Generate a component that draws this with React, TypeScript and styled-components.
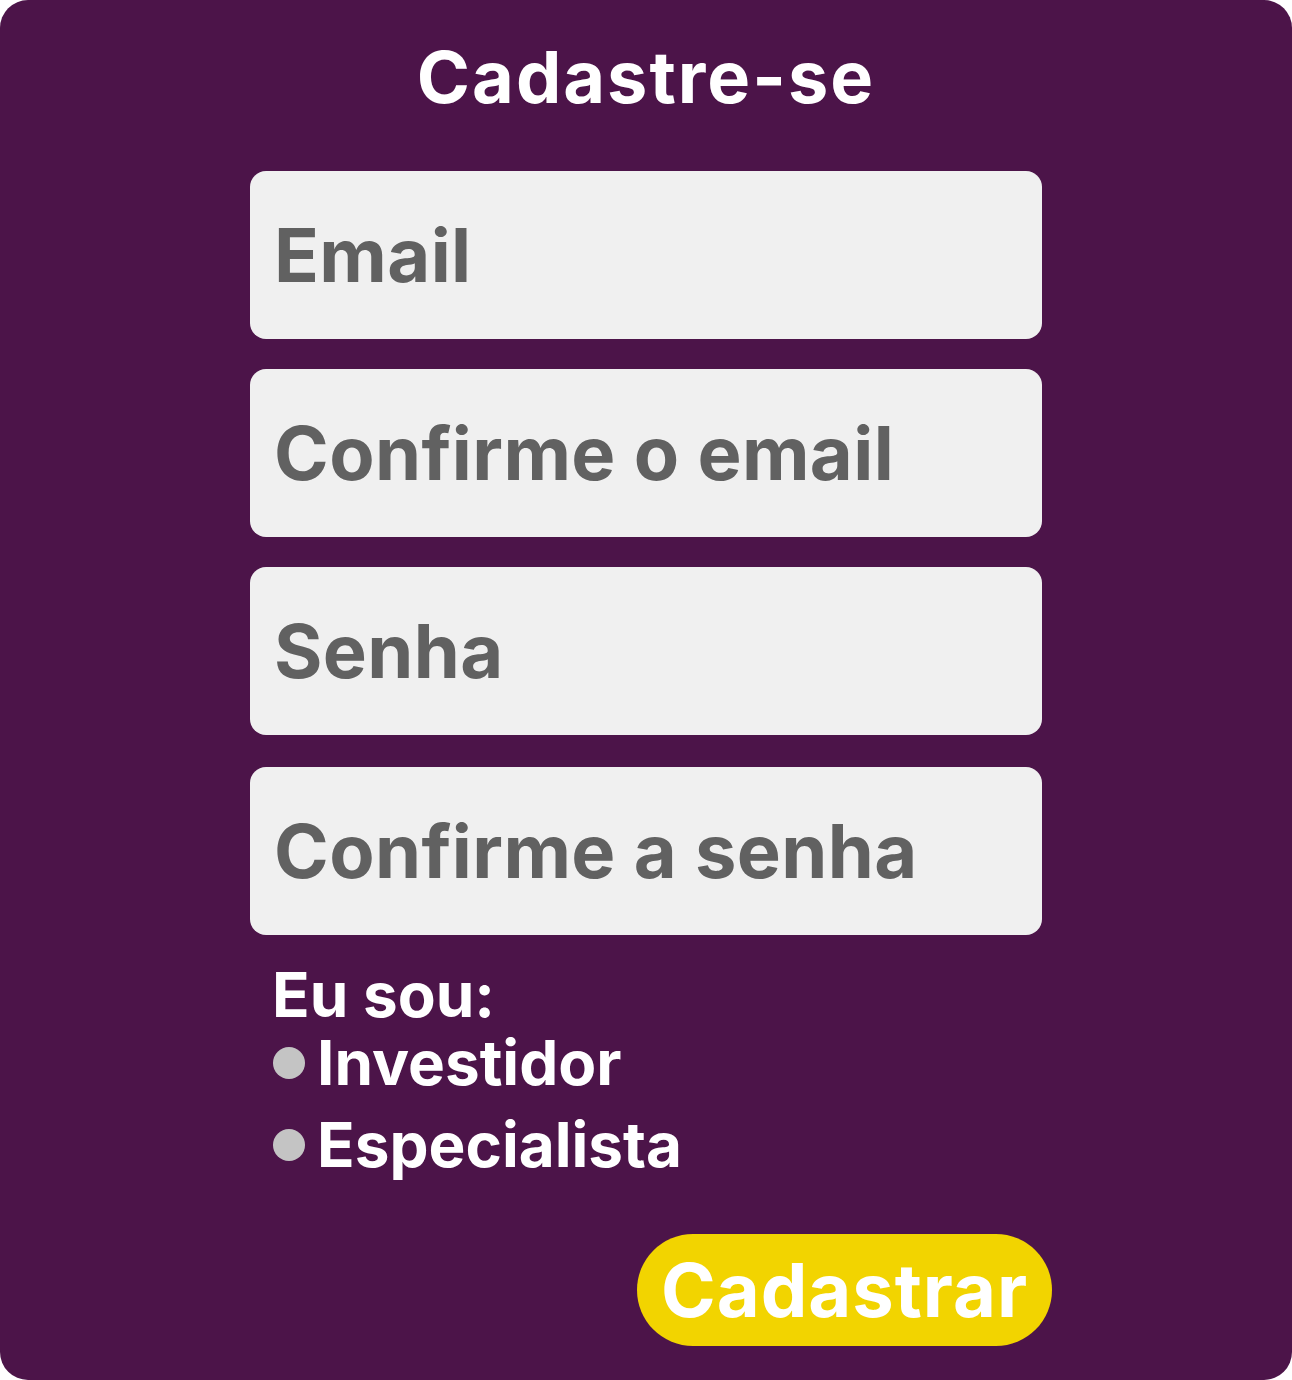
import React from "react";
import styled, { createGlobalStyle } from "styled-components";

const Global = createGlobalStyle`
  html, body { margin: 0; padding: 0; background: #ffffff; }
  body { font-family: Inter, "Noto Sans", sans-serif; }
  * { box-sizing: border-box; }
`;

const Card = styled.main`
  width: 1292px;
  height: 1380px;
  background: #4c1449;
  border-radius: 28px;
  display: flex;
  flex-direction: column;
  align-items: center;
  overflow: hidden;
`;

const Title = styled.h1`
  margin: 0;
  padding-top: 33px;
  font-family: Inter, sans-serif;
  font-weight: 700;
  font-size: 72px;
  line-height: 88px;
  letter-spacing: 2px;
  color: #ffffff;
  text-align: center;
`;

const Form = styled.form`
  width: 792px;
  margin-top: 50px;
  display: flex;
  flex-direction: column;
`;

const Field = styled.input<{ $gap: number }>`
  display: block;
  width: 100%;
  height: 168px;
  margin: ${(p) => p.$gap}px 0 0 0;
  padding: 0 0 0 24px;
  border: none;
  outline: none;
  border-radius: 16px;
  background: #f0f0f0;
  font-family: Inter, sans-serif;
  font-weight: 700;
  font-size: 74px;
  letter-spacing: 0.4px;
  color: #616161;
  &::placeholder {
    color: #616161;
    opacity: 1;
  }
`;

const Choice = styled.fieldset`
  border: none;
  margin: 26px 0 0 0;
  padding: 0 0 0 22px;
  display: flex;
  flex-direction: column;
`;

const Legend = styled.div`
  font-family: Inter, sans-serif;
  font-weight: 700;
  font-size: 62px;
  line-height: 68px;
  color: #ffffff;
`;

const Option = styled.label<{ $top: number }>`
  display: flex;
  align-items: center;
  gap: 12px;
  margin-top: ${(p) => p.$top}px;
  font-family: Inter, sans-serif;
  font-weight: 700;
  font-size: 62px;
  line-height: 68px;
  color: #ffffff;
  cursor: pointer;
`;

const Dot = styled.span`
  width: 32px;
  height: 32px;
  margin-left: 1px;
  border-radius: 50%;
  background: #c4c4c4;
  flex: none;
`;

const Actions = styled.div`
  display: flex;
  justify-content: flex-end;
  margin-top: 55px;
  margin-right: -10px;
`;

const Submit = styled.button`
  width: 415px;
  height: 112px;
  border: none;
  border-radius: 56px;
  background: #f2d400;
  color: #ffffff;
  font-family: Inter, sans-serif;
  font-weight: 700;
  font-size: 74px;
  line-height: 112px;
  letter-spacing: 1px;
  padding: 0;
  cursor: pointer;
`;

const fields = [
  { ph: "Email", gap: 0 },
  { ph: "Confirme o email", gap: 30 },
  { ph: "Senha", gap: 30 },
  { ph: "Confirme a senha", gap: 32 },
];

export default function App() {
  return (
    <>
      <Global />
      <Card>
        <Title>Cadastre-se</Title>
        <Form onSubmit={(e) => e.preventDefault()}>
          {fields.map((f) => (
            <Field key={f.ph} $gap={f.gap} placeholder={f.ph} />
          ))}
          <Choice>
            <Legend>Eu sou:</Legend>
            <Option $top={0}>
              <Dot />
              Investidor
            </Option>
            <Option $top={14}>
              <Dot />
              Especialista
            </Option>
          </Choice>
          <Actions>
            <Submit type="submit">Cadastrar</Submit>
          </Actions>
        </Form>
      </Card>
    </>
  );
}
